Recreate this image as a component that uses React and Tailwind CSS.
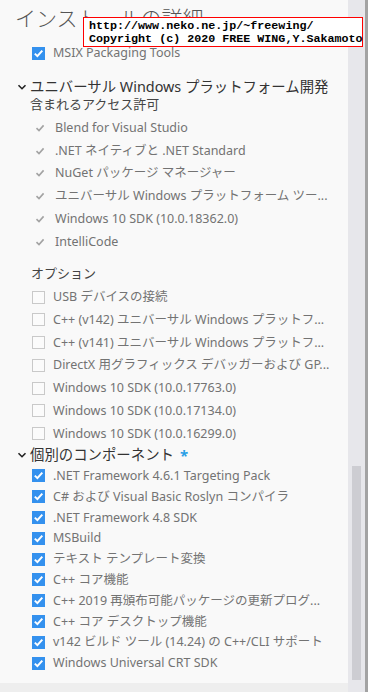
const font = { fontFamily: '"Noto Sans", "Noto Sans CJK JP", sans-serif' };

const included = [
    "Blend for Visual Studio",
    ".NET ネイティブと .NET Standard",
    "NuGet パッケージ マネージャー",
    "ユニバーサル Windows プラットフォーム ツー...",
    "Windows 10 SDK (10.0.18362.0)",
    "IntelliCode",
];

const options = [
    "USB デバイスの接続",
    "C++ (v142) ユニバーサル Windows プラットフ...",
    "C++ (v141) ユニバーサル Windows プラットフ...",
    "DirectX 用グラフィックス デバッガーおよび GP...",
    "Windows 10 SDK (10.0.17763.0)",
    "Windows 10 SDK (10.0.17134.0)",
    "Windows 10 SDK (10.0.16299.0)",
];

const components = [
    ".NET Framework 4.6.1 Targeting Pack",
    "C# および Visual Basic Roslyn コンパイラ",
    ".NET Framework 4.8 SDK",
    "MSBuild",
    "テキスト テンプレート変換",
    "C++ コア機能",
    "C++ 2019 再頒布可能パッケージの更新プログ...",
    "C++ コア デスクトップ機能",
    "v142 ビルド ツール (14.24) の C++/CLI サポート",
    "Windows Universal CRT SDK",
];

const CheckedBox = () => (
    <span className="w-[13px] h-[13px] bg-[#3491ee] flex items-center justify-center shrink-0">
        <svg width="11" height="11" viewBox="0 0 11 11">
            <path d="M1.8 5.6 L4.4 8.1 L9.3 2.6" fill="none" stroke="#fff" strokeWidth="2" />
        </svg>
    </span>
);

const EmptyBox = () => (
    <span className="w-[13px] h-[13px] border border-[#c9c9c9] bg-[#fbfbfb] shrink-0"></span>
);

const GrayCheck = () => (
    <svg width="10" height="10" viewBox="0 0 10 10" className="shrink-0">
        <path d="M1.5 5.2 L4 7.6 L8.6 2.4" fill="none" stroke="#a3a3a3" strokeWidth="1.6" />
    </svg>
);

const Chevron = () => (
    <svg width="10" height="8" viewBox="0 0 10 8" className="shrink-0">
        <path d="M1.5 2.2 L5 5.7 L8.5 2.2" fill="none" stroke="#222" strokeWidth="1.6" />
    </svg>
);

const App = () => {
    return (
        <div className="w-[368px] h-[692px] bg-[#f9f9f9] flex relative overflow-hidden text-[#737373]" style={font}>
            {/* Content */}
            <div className="flex-1 flex flex-col min-w-0">
                <div className="h-[683px] flex flex-col pr-[10px]">
                    <div className="mt-[4px] h-[28px] pl-[15px] text-[21px] leading-[28px] font-light text-[#555555] whitespace-nowrap">インストールの詳細</div>

                    <div className="mt-[10px] h-[22px] flex items-center pl-[32px] gap-[8px] text-[12.5px] leading-[16px] whitespace-nowrap">
                        <CheckedBox />
                        <span>MSIX Packaging Tools</span>
                    </div>

                    <div className="mt-[14px] h-[18px] flex items-center pl-[17px] gap-[3px] text-[14.4px] leading-[18px] text-[#333333] whitespace-nowrap">
                        <Chevron />
                        <span>ユニバーサル Windows プラットフォーム開発</span>
                    </div>
                    <div className="h-[16px] flex items-center pl-[30px] text-[13px] leading-[16px] text-[#444444] whitespace-nowrap">含まれるアクセス許可</div>

                    <div className="mt-[4.6px] flex flex-col">
                        {included.map((item, index) => (
                            <div key={index} className="h-[22.75px] flex items-center pl-[35px] gap-[10px] text-[12.5px] leading-[16px] whitespace-nowrap">
                                <GrayCheck />
                                <span>{item}</span>
                            </div>
                        ))}
                    </div>

                    <div className="mt-[11px] h-[18px] flex items-center pl-[31px] text-[13px] leading-[16px] text-[#444444]">オプション</div>
                    <div className="mt-[3.6px] flex flex-col">
                        {options.map((item, index) => (
                            <div key={index} className="h-[22.75px] flex items-center pl-[32px] gap-[8px] text-[12.5px] leading-[16px] whitespace-nowrap">
                                <EmptyBox />
                                <span>{item}</span>
                            </div>
                        ))}
                    </div>

                    <div className="mt-[1px] h-[18px] flex items-center pl-[17px] gap-[3px] text-[14.4px] leading-[18px] text-[#333333] whitespace-nowrap">
                        <Chevron />
                        <span>個別のコンポーネント</span>
                        <span className="ml-[3px] text-[#2a9fe6] font-bold text-[15px]">*</span>
                    </div>
                    <div className="mt-[1.6px] flex flex-col">
                        {components.map((item, index) => (
                            <div key={index} className="h-[20.8px] flex items-center pl-[32px] gap-[8px] text-[12.5px] leading-[16px] whitespace-nowrap">
                                <CheckedBox />
                                <span>{item}</span>
                            </div>
                        ))}
                    </div>
                </div>
                <div className="flex-1 bg-[#eeeeee]"></div>
            </div>

            {/* Scrollbar */}
            <div className="w-[17px] bg-[#e7e7eb] flex flex-col">
                <div className="h-[466px]"></div>
                <div className="ml-[4px] w-[9px] h-[214px] bg-[#cdcdd2]"></div>
            </div>
            <div className="w-[3px] bg-[#a3a3a3]"></div>

            {/* Watermark */}
            <div className="absolute left-[83px] top-[17px] w-[280px] h-[30px] bg-white border border-[#ff0000] pl-[5px] pt-[2px] text-black font-bold text-[11.7px] leading-[12.5px] whitespace-nowrap" style={{ fontFamily: '"Liberation Mono", monospace' }}>
                <div>http://www.neko.ne.jp/~freewing/</div>
                <div>Copyright (c) 2020 FREE WING,Y.Sakamoto</div>
            </div>
        </div>
    );
}

export default App;
